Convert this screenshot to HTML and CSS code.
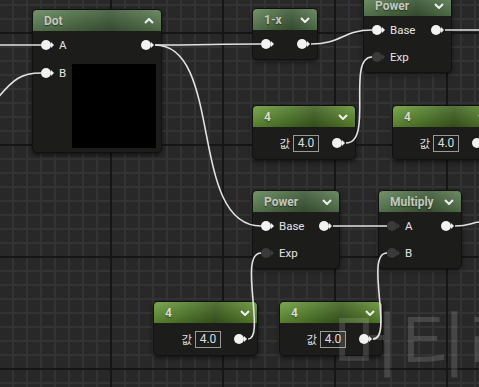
FILE: index.html
```html
<!DOCTYPE html>
<html lang="ko">
<head>
  <meta charset="UTF-8">
  <meta name="viewport" content="width=device-width, initial-scale=1.0">
  <title>Material Graph</title>
  <link rel="stylesheet" href="styles.css">
</head>
<body>
  <div class="graph">
    <svg class="wires" width="479" height="387" viewBox="0 0 479 387">
      <path d="M0,45 H41"/>
      <path d="M-4,100 C14,78 22,73 41,73"/>
      <path d="M155,45 C200,45 220,44 261,44"/>
      <path d="M155,45 C224,45 188,226 261,226"/>
      <path d="M311,44 C342,44 342,30 372,30"/>
      <path d="M445,30 H479"/>
      <path d="M346,143 C374,143 346,57 372,57"/>
      <path d="M333,226 H387"/>
      <path d="M455,226 C468,226 471,223 479,222"/>
      <path d="M248,339 C266,339 238,253 261,253"/>
      <path d="M373,339 C394,339 364,253 387,253"/>
    </svg>

    <!-- Dot -->
    <div class="node op n-dot">
      <div class="node-head">
        <span>Dot</span>
        <svg class="chev" width="10" height="6" viewBox="0 0 10 6"><polyline points="1,5 5,1 9,5"/></svg>
      </div>
      <div class="node-body dot-body">
        <div class="row">
          <span class="pin"></span><span class="label">A</span>
          <span class="pin out"></span>
        </div>
        <div class="row tall">
          <div class="pin-label">
            <span class="pin"></span><span class="label">B</span>
          </div>
          <div class="preview"></div>
        </div>
      </div>
    </div>

    <!-- 1-x -->
    <div class="node op n-onex">
      <div class="node-head">
        <span>1-x</span>
        <svg class="chev" width="10" height="6" viewBox="0 0 10 6"><polyline points="1,1 5,5 9,1"/></svg>
      </div>
      <div class="node-body">
        <div class="row">
          <span class="pin"></span>
          <span class="pin out"></span>
        </div>
      </div>
    </div>

    <!-- Power (top) -->
    <div class="node op n-pow1">
      <div class="node-head">
        <span>Power</span>
        <svg class="chev" width="10" height="6" viewBox="0 0 10 6"><polyline points="1,1 5,5 9,1"/></svg>
      </div>
      <div class="node-body">
        <div class="row">
          <span class="pin"></span><span class="label">Base</span>
          <span class="pin out"></span>
        </div>
        <div class="row">
          <span class="pin off"></span><span class="label">Exp</span>
        </div>
      </div>
    </div>

    <!-- constants -->
    <div class="node const n-c1">
      <div class="node-head">
        <span>4</span>
        <svg class="chev" width="10" height="6" viewBox="0 0 10 6"><polyline points="1,1 5,5 9,1"/></svg>
      </div>
      <div class="node-body">
        <div class="row value-row">
          <span class="val-label">값</span><span class="val-box">4.0</span>
          <span class="pin"></span>
        </div>
      </div>
    </div>

    <div class="node const n-c2">
      <div class="node-head">
        <span>4</span>
        <svg class="chev" width="10" height="6" viewBox="0 0 10 6"><polyline points="1,1 5,5 9,1"/></svg>
      </div>
      <div class="node-body">
        <div class="row value-row">
          <span class="val-label">값</span><span class="val-box">4.0</span>
          <span class="pin"></span>
        </div>
      </div>
    </div>

    <!-- Power (bottom) -->
    <div class="node op n-pow2">
      <div class="node-head">
        <span>Power</span>
        <svg class="chev" width="10" height="6" viewBox="0 0 10 6"><polyline points="1,1 5,5 9,1"/></svg>
      </div>
      <div class="node-body">
        <div class="row">
          <span class="pin"></span><span class="label">Base</span>
          <span class="pin out"></span>
        </div>
        <div class="row">
          <span class="pin off"></span><span class="label">Exp</span>
        </div>
      </div>
    </div>

    <!-- Multiply -->
    <div class="node op n-mul">
      <div class="node-head">
        <span>Multiply</span>
        <svg class="chev" width="10" height="6" viewBox="0 0 10 6"><polyline points="1,1 5,5 9,1"/></svg>
      </div>
      <div class="node-body">
        <div class="row">
          <span class="pin off"></span><span class="label">A</span>
          <span class="pin out"></span>
        </div>
        <div class="row">
          <span class="pin off"></span><span class="label">B</span>
        </div>
      </div>
    </div>

    <div class="node const n-c3">
      <div class="node-head">
        <span>4</span>
        <svg class="chev" width="10" height="6" viewBox="0 0 10 6"><polyline points="1,1 5,5 9,1"/></svg>
      </div>
      <div class="node-body">
        <div class="row value-row">
          <span class="val-label">값</span><span class="val-box">4.0</span>
          <span class="pin"></span>
        </div>
      </div>
    </div>

    <div class="node const n-c4">
      <div class="node-head">
        <span>4</span>
        <svg class="chev" width="10" height="6" viewBox="0 0 10 6"><polyline points="1,1 5,5 9,1"/></svg>
      </div>
      <div class="node-body">
        <div class="row value-row">
          <span class="val-label">값</span><span class="val-box">4.0</span>
          <span class="pin"></span>
        </div>
      </div>
    </div>

    <div class="watermark">머티리얼</div>
  </div>
</body>
</html>
```

FILE: styles.css
```css
body {
  margin: 0;
  background: #282828;
  font-family: Roboto, "Noto Sans CJK KR", sans-serif;
}
.graph {
  position: relative;
  width: 479px;
  height: 387px;
  overflow: hidden;
  background-color: #282828;
  background-image:
    linear-gradient(90deg, #161616 2px, transparent 2px),
    linear-gradient(180deg, #161616 2px, transparent 2px),
    linear-gradient(90deg, #333 2px, transparent 2px),
    linear-gradient(180deg, #333 2px, transparent 2px);
  background-size: 112px 100%, 100% 112px, 14px 100%, 100% 14px;
  background-position: 110px 0, 0 32px, 110px 0, 0 32px;
}
.wires {
  position: absolute;
  left: 0;
  top: 0;
  z-index: 2;
  fill: none;
  stroke: #e2e2e2;
  stroke-width: 1.6;
}

/* nodes */
.node {
  position: absolute;
  z-index: 1;
  background: #1c1d1b;
  border: 1px solid #111;
  border-radius: 5px;
  box-shadow: 0 2px 4px rgba(0, 0, 0, 0.55);
}
.node-head {
  height: 21px;
  display: flex;
  align-items: center;
  justify-content: space-between;
  padding: 0 7px 0 11px;
  border-radius: 4px 4px 0 0;
  font-size: 12px;
  font-weight: bold;
  color: #c4c9bf;
  text-shadow: 0 1px 1px rgba(0, 0, 0, 0.5);
}
.op .node-head {
  background:
    linear-gradient(180deg, rgba(255, 255, 255, 0.1), rgba(0, 0, 0, 0.18)),
    linear-gradient(90deg, #64875a 0%, #4c6c44 35%, #3f5a39 60%, #5c7d53 100%);
}
.const .node-head {
  background:
    linear-gradient(180deg, rgba(255, 255, 255, 0.12), rgba(0, 0, 0, 0.2)),
    linear-gradient(90deg, #6b9c3a 0%, #4f7a27 35%, #3e5f1f 60%, #63922f 100%);
  color: #d6dccd;
}
.chev {
  fill: none;
  stroke: #f0f0f0;
  stroke-width: 2;
}
.node-body {
  padding: 5px 7px 6px 8px;
  display: flex;
  flex-direction: column;
  gap: 9px;
}
.row {
  height: 18px;
  display: flex;
  align-items: center;
}
.label {
  font-size: 11.5px;
  color: #e4e4e4;
}
.pin {
  position: relative;
  flex: none;
  width: 10px;
  height: 10px;
  border-radius: 50%;
  background: #f2f2f2;
  margin-right: 8px;
}
.pin::after {
  content: "";
  position: absolute;
  right: -3px;
  top: 2px;
  border-left: 3px solid #f2f2f2;
  border-top: 3px solid transparent;
  border-bottom: 3px solid transparent;
}
.pin.off {
  background: #3a3a3a;
}
.pin.off::after {
  border-left-color: #3a3a3a;
}
.pin.out {
  margin-left: auto;
  margin-right: 3px;
}

/* dot node */
.dot-body {
  gap: 10px;
  padding-bottom: 4px;
}
.row.tall {
  height: auto;
  align-items: flex-start;
}
.pin-label {
  height: 18px;
  display: flex;
  align-items: center;
}
.preview {
  width: 84px;
  height: 84px;
  margin-left: auto;
  margin-right: -2px;
  background: #000;
}

/* constant nodes */
.const .node-body {
  padding: 6px 10px 6px 8px;
}
.value-row {
  height: 20px;
  justify-content: flex-end;
}
.val-label {
  font-size: 11.5px;
  color: #dcdcdc;
  margin-right: 3px;
}
.val-box {
  width: 24px;
  height: 15px;
  border: 1px solid #9a9a9a;
  font-size: 12px;
  line-height: 15px;
  color: #dcdcdc;
  text-align: center;
  margin-right: 13px;
}
.value-row .pin {
  margin-right: 3px;
}

/* node placement on the canvas */
.n-dot { left: 32px; top: 9px; width: 128px; }
.n-onex { left: 252px; top: 8px; width: 64px; }
.n-pow1 { left: 363px; top: -6px; width: 87px; }
.n-c1 { left: 252px; top: 105px; width: 102px; }
.n-c2 { left: 392px; top: 105px; width: 102px; }
.n-pow2 { left: 252px; top: 190px; width: 86px; }
.n-mul { left: 378px; top: 190px; width: 82px; }
.n-c3 { left: 153px; top: 301px; width: 103px; }
.n-c4 { left: 279px; top: 301px; width: 102px; }

.watermark {
  position: absolute;
  left: 333px;
  top: 298px;
  z-index: 3;
  font-family: "Noto Sans CJK KR", sans-serif;
  font-size: 72px;
  line-height: 84px;
  letter-spacing: 1px;
  color: rgba(255, 255, 255, 0.14);
  white-space: nowrap;
}
```
